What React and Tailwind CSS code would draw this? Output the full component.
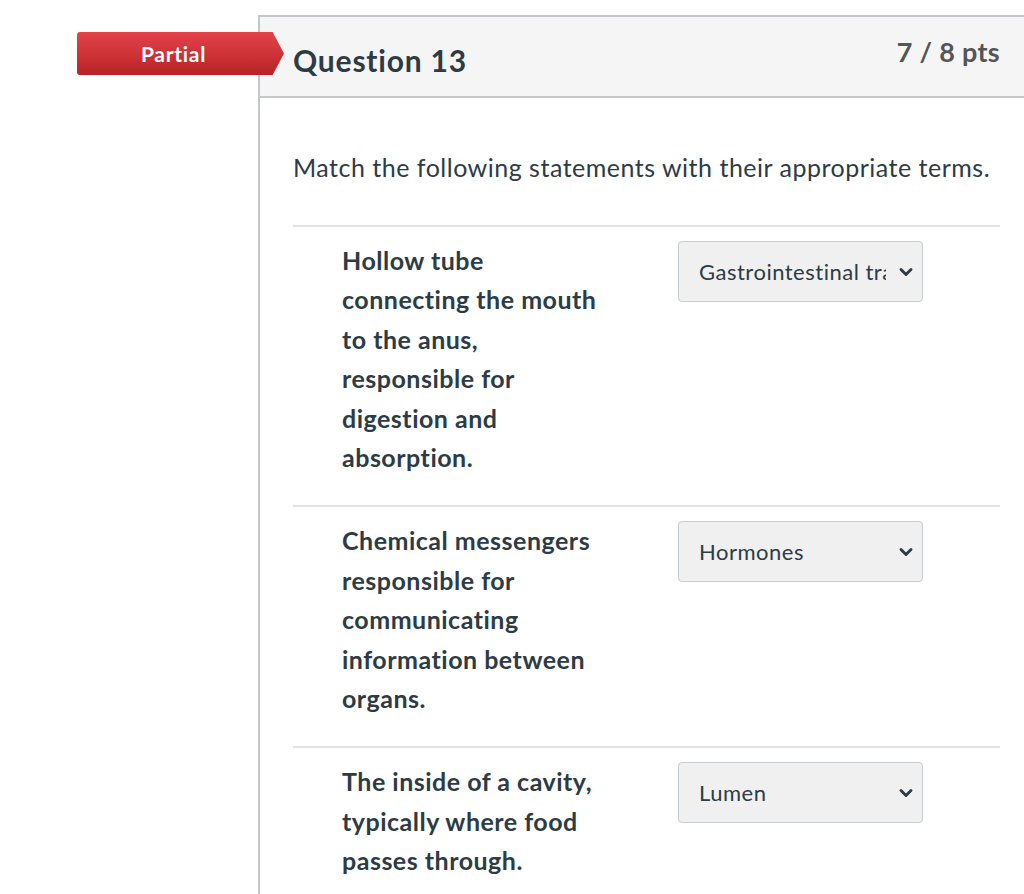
import React from 'react';
import { ChevronDown } from 'lucide-react';

const rows = [
  {
    text: 'Hollow tube connecting the mouth to the anus, responsible for digestion and absorption.',
    answer: 'Gastrointestinal tract',
  },
  {
    text: 'Chemical messengers responsible for communicating information between organs.',
    answer: 'Hormones',
  },
  {
    text: 'The inside of a cavity, typically where food passes through.',
    answer: 'Lumen',
  },
];

const App = () => {
  return (
    <div className="relative flex h-[894px] flex-col overflow-hidden bg-white pt-[15px] font-['Lato','Liberation_Sans',sans-serif] text-[#2d3b45]">
      {/* Partial badge */}
      <div className="absolute left-[77px] top-[32px] flex h-[43px] w-[207px] items-center">
        <div
          className="flex h-full w-full items-center bg-gradient-to-b from-[#e4424a] to-[#b72325] pl-[64px] text-[21px] font-bold tracking-[0.7px] text-white"
          style={{ clipPath: 'polygon(0 0, 94.5% 0, 100% 50%, 94.5% 100%, 0 100%)', borderRadius: '3px 0 0 3px' }}
        >
          Partial
        </div>
      </div>

      <div className="ml-[258px] flex-1 border-l-2 border-t-2 border-[#c4c8cc]">
        {/* Header */}
        <div className="flex h-[81px] items-start justify-between border-b-2 border-[#c4c8cc] bg-[#f5f5f5] pl-[33px] pr-[24px]">
          <h2 className="pt-[25px] text-[30px] font-bold leading-[36px] tracking-[0.8px]">Question 13</h2>
          <div className="pt-[19px] text-[27px] font-bold leading-[32px] tracking-[0.3px] text-[#555]">7 / 8 pts</div>
        </div>

        {/* Body */}
        <div className="pl-[33px] pr-[24px] pt-[52px]">
          <p className="text-[25px] leading-[34px] tracking-[0.5px]">Match the following statements with their appropriate terms.</p>

          <div className="mt-[41px]">
            {rows.map((r, i) => (
              <div key={i} className="flex border-t-2 border-[#e0e3e5] pb-[28px] pl-[49px] pt-[14px]">
                <div className="w-[268px] text-[25px] font-bold leading-[39.4px] tracking-[0.5px]">{r.text}</div>
                <div className="ml-[68px]">
                  <div className="relative flex h-[61px] w-[245px] items-center rounded-[4px] border border-[#c7cdd1] bg-[#f0f0f0] pl-[20px] pr-[36px]">
                    <span className="overflow-hidden whitespace-nowrap text-[22px] tracking-[0.5px]">{r.answer}</span>
                    <ChevronDown size={20} strokeWidth={3.5} className="absolute right-[6px] top-[20px] text-[#2d3b45]" />
                  </div>
                </div>
              </div>
            ))}
          </div>
        </div>
      </div>
    </div>
  );
};

export default App;
